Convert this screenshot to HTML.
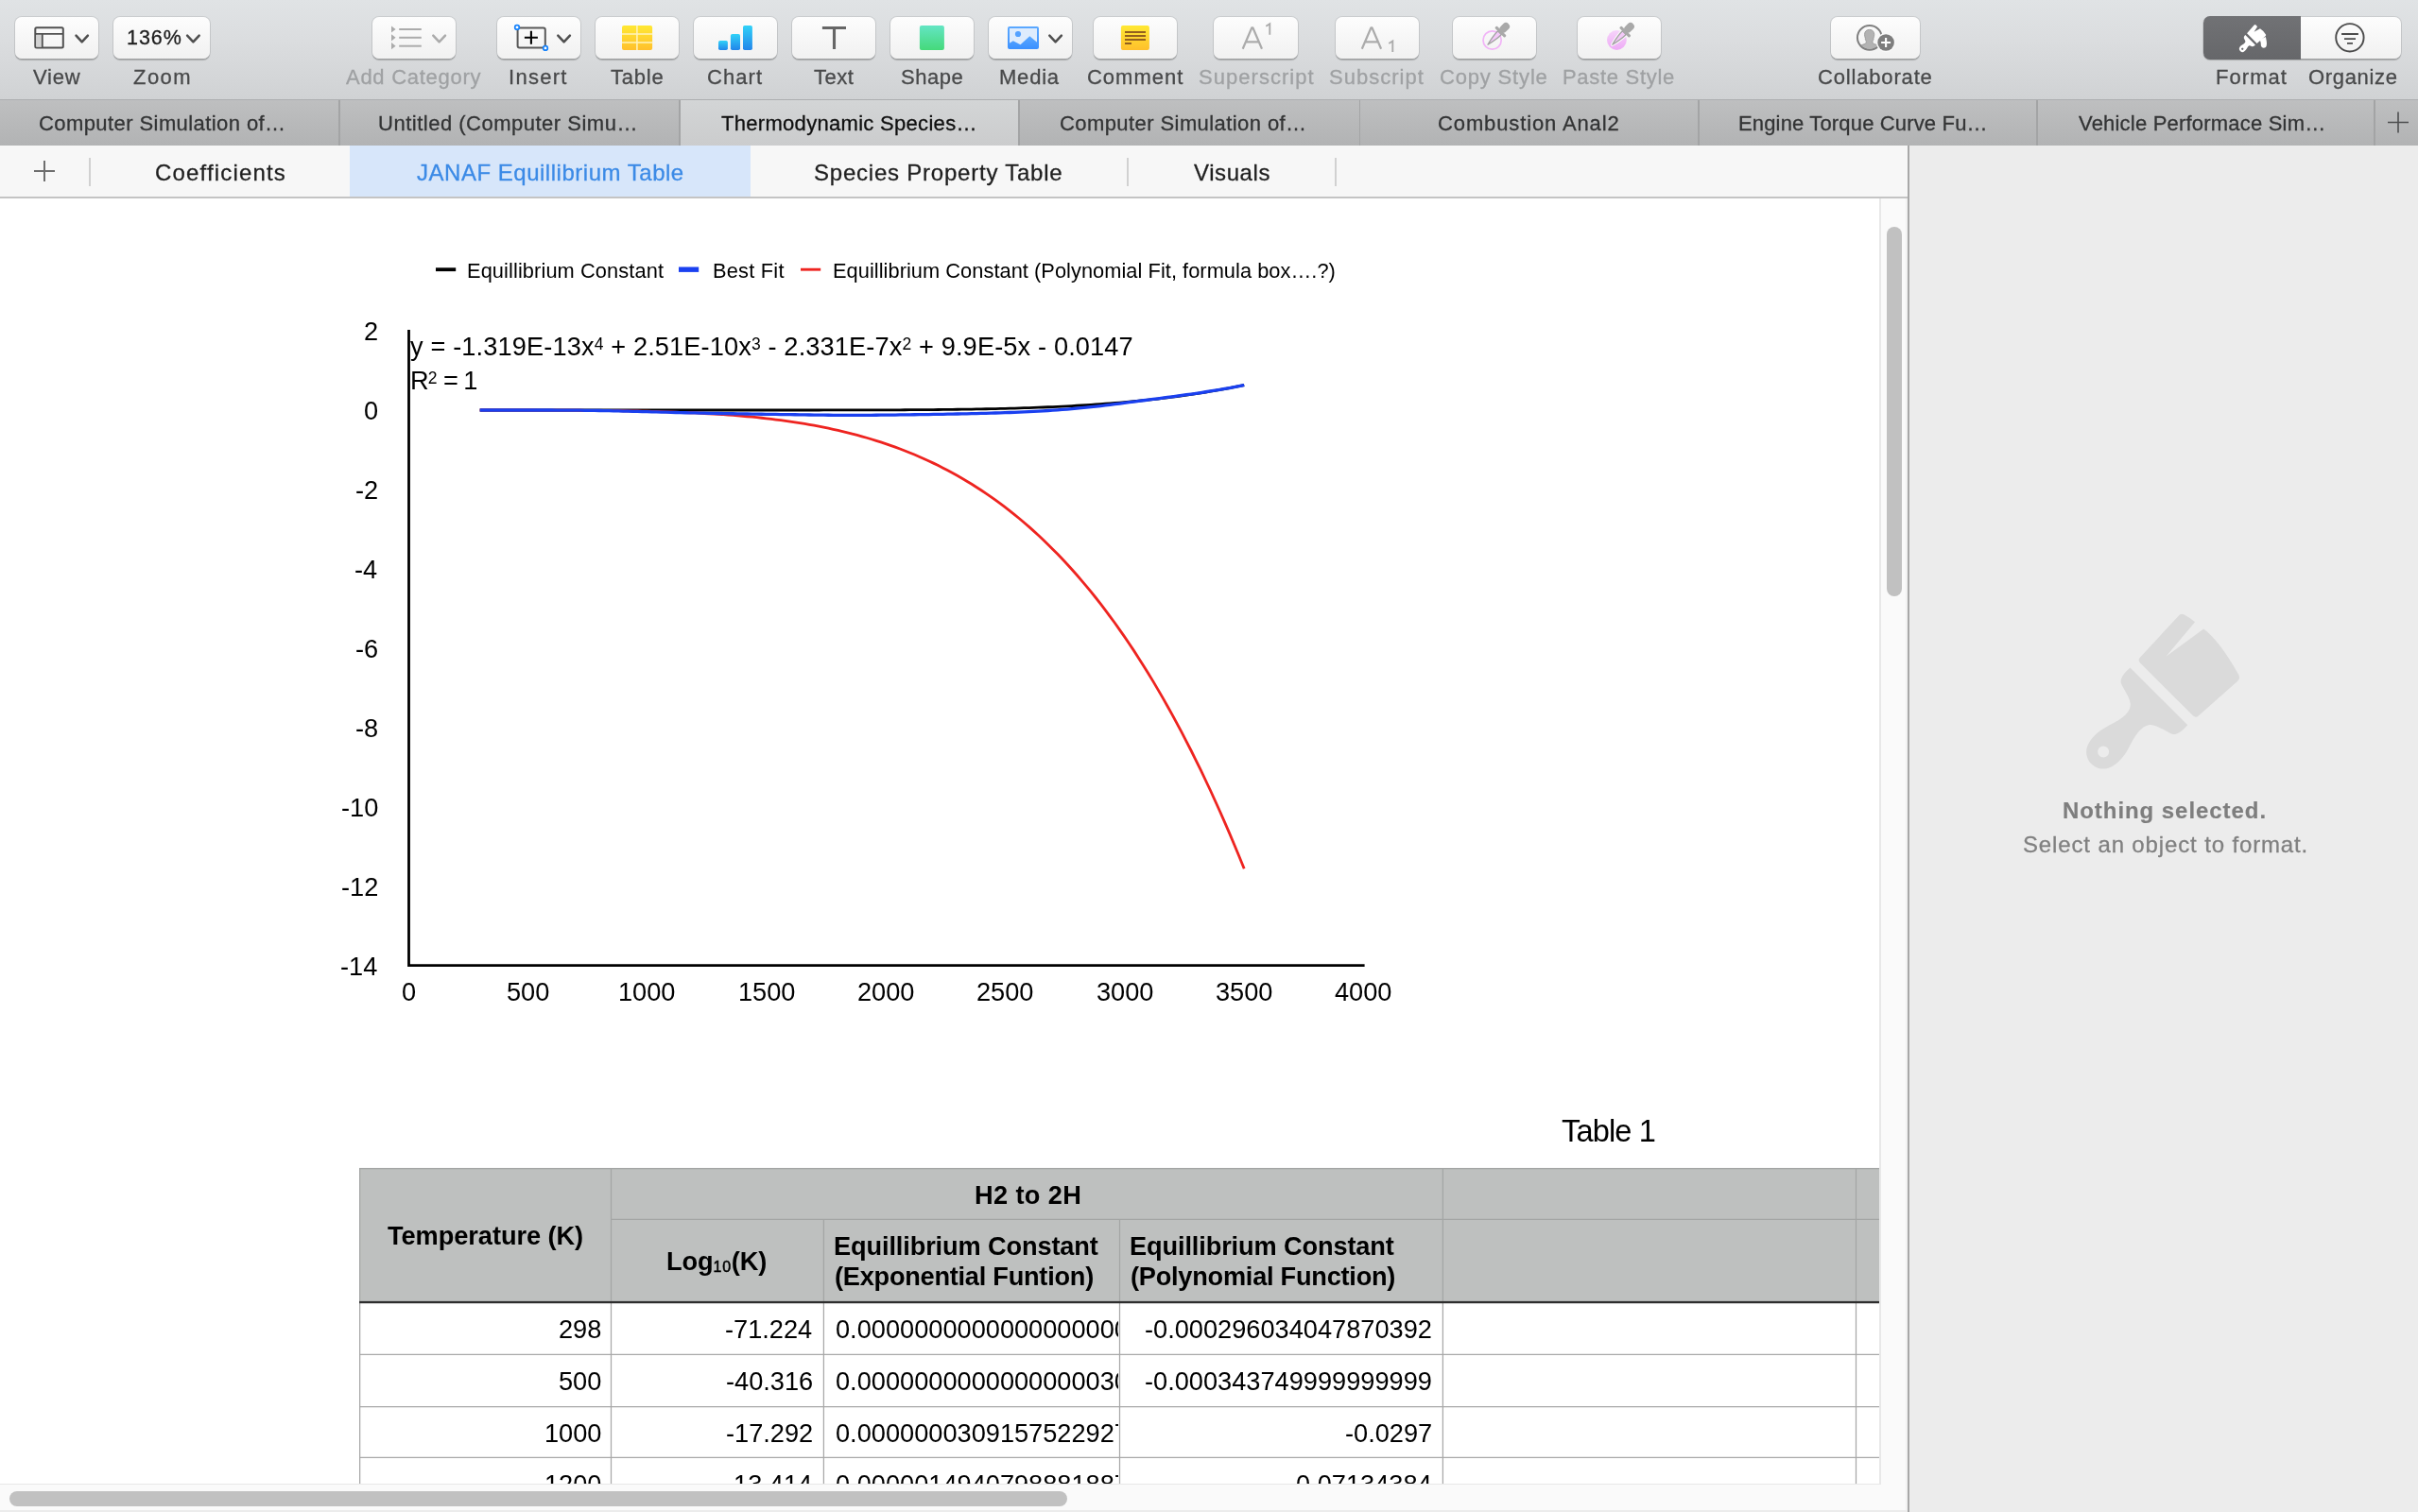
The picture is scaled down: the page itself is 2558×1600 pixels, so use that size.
<!DOCTYPE html>
<html lang="en"><head><meta charset="utf-8"><title>Numbers</title>
<style>
html,body{margin:0;padding:0;}
body{width:2558px;height:1600px;overflow:hidden;position:relative;background:#fff;font-family:"Liberation Sans",sans-serif;}
div,svg{position:absolute;box-sizing:border-box;}
.t{white-space:nowrap;will-change:transform;}
.btn{top:17.5px;height:44.5px;border-radius:7px;background:linear-gradient(#fdfdfd,#f1f1f1);box-shadow:0 0 0 1px rgba(0,0,0,.085),0 1.2px 1px rgba(0,0,0,.20);}
.vl{width:1px;background:#a9a9a9;}
.hl{height:1px;background:#a9a9a9;}

</style></head>
<body>
<div id="toolbar" style="left:0;top:0;width:2558px;height:105px;background:linear-gradient(#e0e3e5 0%,#dbdddf 40%,#d0d2d4 100%);"></div><div style="left:0;top:104.5px;width:2558px;height:1.5px;background:#adaeb0;"></div><div class="btn" style="left:15.8px;width:88.3px;"></div><div class="btn" style="left:119.7px;width:102.2px;"></div><div class="btn" style="left:393.7px;width:88.3px;"></div><div class="btn" style="left:525.7px;width:88.4px;"></div><div class="btn" style="left:629.8px;width:88.3px;"></div><div class="btn" style="left:733.7px;width:88.3px;"></div><div class="btn" style="left:837.7px;width:88.4px;"></div><div class="btn" style="left:941.7px;width:88.3px;"></div><div class="btn" style="left:1045.8px;width:88.3px;"></div><div class="btn" style="left:1156.9px;width:88.4px;"></div><div class="btn" style="left:1284.4px;width:88.9px;"></div><div class="btn" style="left:1412.5px;width:88.8px;"></div><div class="btn" style="left:1536.7px;width:88.4px;"></div><div class="btn" style="left:1669.0px;width:88.3px;"></div><div class="btn" style="left:1936.5px;width:94.7px;"></div><div class="btn" style="left:2331px;width:209.3px;"></div><div style="left:2330.9px;top:17px;width:103px;height:45.6px;border-radius:7px 0 0 7px;background:linear-gradient(#717275,#66676a);"></div><div class="t" style="top:71.38px;font-size:22px;line-height:22px;color:#48494a;letter-spacing:0.749px;left:34.90px;-webkit-text-stroke:0.3px;">View</div><div class="t" style="top:71.38px;font-size:22px;line-height:22px;color:#48494a;letter-spacing:1.466px;left:140.80px;-webkit-text-stroke:0.3px;">Zoom</div><div class="t" style="top:71.38px;font-size:22px;line-height:22px;color:#9fa1a3;letter-spacing:0.732px;left:366.46px;-webkit-text-stroke:0.3px;">Add Category</div><div class="t" style="top:71.38px;font-size:22px;line-height:22px;color:#48494a;letter-spacing:1.282px;left:537.97px;-webkit-text-stroke:0.3px;">Insert</div><div class="t" style="top:71.38px;font-size:22px;line-height:22px;color:#48494a;letter-spacing:0.782px;left:646.01px;-webkit-text-stroke:0.3px;">Table</div><div class="t" style="top:71.38px;font-size:22px;line-height:22px;color:#48494a;letter-spacing:1.058px;left:748.13px;-webkit-text-stroke:0.3px;">Chart</div><div class="t" style="top:71.38px;font-size:22px;line-height:22px;color:#48494a;letter-spacing:0.515px;left:860.76px;-webkit-text-stroke:0.3px;">Text</div><div class="t" style="top:71.38px;font-size:22px;line-height:22px;color:#48494a;letter-spacing:0.525px;left:952.75px;-webkit-text-stroke:0.3px;">Shape</div><div class="t" style="top:71.38px;font-size:22px;line-height:22px;color:#48494a;letter-spacing:0.783px;left:1056.95px;-webkit-text-stroke:0.3px;">Media</div><div class="t" style="top:71.38px;font-size:22px;line-height:22px;color:#48494a;letter-spacing:0.986px;left:1149.63px;-webkit-text-stroke:0.3px;">Comment</div><div class="t" style="top:71.38px;font-size:22px;line-height:22px;color:#9fa1a3;letter-spacing:1.038px;left:1267.75px;-webkit-text-stroke:0.3px;">Superscript</div><div class="t" style="top:71.38px;font-size:22px;line-height:22px;color:#9fa1a3;letter-spacing:1.024px;left:1406.00px;-webkit-text-stroke:0.3px;">Subscript</div><div class="t" style="top:71.38px;font-size:22px;line-height:22px;color:#9fa1a3;letter-spacing:0.828px;left:1523.38px;-webkit-text-stroke:0.3px;">Copy Style</div><div class="t" style="top:71.38px;font-size:22px;line-height:22px;color:#9fa1a3;letter-spacing:0.700px;left:1653.20px;-webkit-text-stroke:0.3px;">Paste Style</div><div class="t" style="top:71.38px;font-size:22px;line-height:22px;color:#48494a;letter-spacing:0.833px;left:1922.63px;-webkit-text-stroke:0.3px;">Collaborate</div><div class="t" style="top:71.38px;font-size:22px;line-height:22px;color:#48494a;letter-spacing:1.056px;left:2344.20px;-webkit-text-stroke:0.3px;">Format</div><div class="t" style="top:71.38px;font-size:22px;line-height:22px;color:#48494a;letter-spacing:0.677px;left:2441.56px;-webkit-text-stroke:0.3px;">Organize</div><div class="t" style="top:29.50px;font-size:21.5px;line-height:21.5px;color:#1d1d1d;letter-spacing:0.968px;left:133.66px;-webkit-text-stroke:0.3px;">136%</div><div style="left:0;top:106px;width:2558px;height:48px;background:linear-gradient(#bebfc0,#b2b3b4);"></div><div style="left:719.3px;top:106px;width:359.0px;height:48px;background:linear-gradient(#d3d5d6,#cbcccd);"></div><div style="left:358.40000000000003px;top:106px;width:1.8px;height:48px;background:#a3a4a5;"></div><div style="left:718.4px;top:106px;width:1.8px;height:48px;background:#a3a4a5;"></div><div style="left:1077.3999999999999px;top:106px;width:1.8px;height:48px;background:#a3a4a5;"></div><div style="left:1437.6px;top:106px;width:1.8px;height:48px;background:#a3a4a5;"></div><div style="left:1795.8999999999999px;top:106px;width:1.8px;height:48px;background:#a3a4a5;"></div><div style="left:2154.1px;top:106px;width:1.8px;height:48px;background:#a3a4a5;"></div><div style="left:2511.4px;top:106px;width:1.8px;height:48px;background:#a3a4a5;"></div><div class="t" style="top:119.58px;font-size:22px;line-height:22px;color:#333435;letter-spacing:0.419px;left:41.38px;-webkit-text-stroke:0.3px;">Computer Simulation of…</div><div class="t" style="top:119.58px;font-size:22px;line-height:22px;color:#333435;letter-spacing:0.503px;left:400.30px;-webkit-text-stroke:0.3px;">Untitled (Computer Simu…</div><div class="t" style="top:119.58px;font-size:22px;line-height:22px;color:#0f0f0f;letter-spacing:0.303px;left:762.51px;-webkit-text-stroke:0.3px;">Thermodynamic Species…</div><div class="t" style="top:119.58px;font-size:22px;line-height:22px;color:#333435;letter-spacing:0.419px;left:1121.38px;-webkit-text-stroke:0.3px;">Computer Simulation of…</div><div class="t" style="top:119.58px;font-size:22px;line-height:22px;color:#333435;letter-spacing:0.877px;left:1521.38px;-webkit-text-stroke:0.3px;">Combustion Anal2</div><div class="t" style="top:119.58px;font-size:22px;line-height:22px;color:#333435;letter-spacing:0.157px;left:1838.95px;-webkit-text-stroke:0.3px;">Engine Torque Curve Fu…</div><div class="t" style="top:119.58px;font-size:22px;line-height:22px;color:#333435;letter-spacing:0.201px;left:2198.60px;-webkit-text-stroke:0.3px;">Vehicle Performace Sim…</div><svg style="left:2524px;top:117px" width="26" height="26" viewBox="0 0 26 26"><path d="M13 1.5v22M2 12.5h22" stroke="#4e4f50" stroke-width="1.6" fill="none"/></svg><div style="left:0;top:154px;width:2018px;height:54.5px;background:#f7f7f7;"></div><div style="left:370px;top:154px;width:424px;height:54.5px;background:#d7e6fa;"></div><div style="left:0;top:208px;width:2018px;height:2px;background:#c4c4c4;"></div><div style="left:94.0px;top:167px;width:2px;height:30px;background:#d1d1d1;"></div><div style="left:1191.8px;top:167px;width:2px;height:30px;background:#d1d1d1;"></div><div style="left:1411.8px;top:167px;width:2px;height:30px;background:#d1d1d1;"></div><svg style="left:35px;top:169px" width="24" height="24" viewBox="0 0 24 24"><path d="M12 1v22M1 12h22" stroke="#6e6e6e" stroke-width="2" fill="none"/></svg><div class="t" style="top:170.98px;font-size:24px;line-height:24px;color:#1f1f1f;letter-spacing:1.170px;left:163.78px;-webkit-text-stroke:0.3px;">Coefficients</div><div class="t" style="top:170.98px;font-size:24px;line-height:24px;color:#3b8ae6;letter-spacing:0.516px;left:440.88px;-webkit-text-stroke:0.3px;">JANAF Equillibrium Table</div><div class="t" style="top:170.98px;font-size:24px;line-height:24px;color:#1f1f1f;letter-spacing:0.775px;left:861.41px;-webkit-text-stroke:0.3px;">Species Property Table</div><div class="t" style="top:170.98px;font-size:24px;line-height:24px;color:#1f1f1f;letter-spacing:0.589px;left:1262.89px;-webkit-text-stroke:0.3px;">Visuals</div><div id="canvas" style="left:0;top:210px;width:1988px;height:1360px;background:#fff;"></div><div style="left:1988px;top:210px;width:30px;height:1390px;background:#fafafa;"></div><div style="left:1988px;top:210px;width:1.7px;height:1361.7px;background:#e8e8e8;"></div><div style="left:2016px;top:210px;width:2px;height:1390px;background:#f2f2f2;"></div><div style="left:1996.2px;top:240px;width:16px;height:391px;border-radius:8px;background:#c1c1c1;"></div><div style="left:2018px;top:154px;width:540px;height:1446px;background:#ececec;"></div><div style="left:2018px;top:154px;width:2.2px;height:1446px;background:#a8a8a8;"></div><svg style="left:0;top:0" width="2558" height="105" viewBox="0 0 2558 105"><defs><linearGradient id="gy" x1="0" y1="0" x2="0" y2="1"><stop offset="0" stop-color="#ffe833"/><stop offset="1" stop-color="#ffc02c"/></linearGradient><linearGradient id="gb" x1="0" y1="0" x2="0" y2="1"><stop offset="0" stop-color="#31d2f8"/><stop offset="1" stop-color="#2285ea"/></linearGradient><linearGradient id="gg" x1="0" y1="0" x2="0" y2="1"><stop offset="0" stop-color="#64e5c4"/><stop offset="1" stop-color="#45d97a"/></linearGradient><linearGradient id="gm" x1="0" y1="0" x2="0" y2="1"><stop offset="0" stop-color="#5ba8ff"/><stop offset="1" stop-color="#3d92ff"/></linearGradient><linearGradient id="gp" x1="0" y1="0" x2="0" y2="1"><stop offset="0" stop-color="#f6d4fa"/><stop offset="1" stop-color="#eeaaf6"/></linearGradient></defs><rect x="37.3" y="29.2" width="29.5" height="21.4" rx="1.5" fill="none" stroke="#505050" stroke-width="2"/><rect x="38.3" y="36.8" width="6" height="12.8" fill="#d2d2d2"/><path d="M37.3,35.9H66.8M44.8,35.9V50.6" stroke="#505050" stroke-width="1.8" fill="none"/><path d="M80.5,37.6 L86.7,44.4 L92.9,37.6" fill="none" stroke="#4f4f4f" stroke-width="2.5" stroke-linecap="round" stroke-linejoin="round"/><path d="M198.1,37.6 L204.39999999999998,44.4 L210.7,37.6" fill="none" stroke="#4f4f4f" stroke-width="2.5" stroke-linecap="round" stroke-linejoin="round"/><path d="M414,27.4 L418.6,31.0 L414,34.6Z" fill="#ababab"/><path d="M422.2,31.0H445.8" stroke="#ababab" stroke-width="2"/><path d="M414,36.199999999999996 L418.6,39.8 L414,43.4Z" fill="#ababab"/><path d="M422.2,39.8H445.8" stroke="#ababab" stroke-width="2"/><path d="M414,45.1 L418.6,48.7 L414,52.300000000000004Z" fill="#ababab"/><path d="M422.2,48.7H445.8" stroke="#ababab" stroke-width="2"/><path d="M458.3,37.6 L464.65,44.4 L471.0,37.6" fill="none" stroke="#ababab" stroke-width="2.5" stroke-linecap="round" stroke-linejoin="round"/><rect x="547.6" y="29.6" width="29.2" height="20.8" rx="2" fill="none" stroke="#585858" stroke-width="2"/><path d="M554.9,39.8H568.9M561.9,32.8V46.8" stroke="#000" stroke-width="2.1" fill="none"/><circle cx="547" cy="28.9" r="2.3" fill="#fff" stroke="#1682fb" stroke-width="1.7"/><circle cx="577" cy="50.9" r="2.3" fill="#fff" stroke="#1682fb" stroke-width="1.7"/><path d="M590.3,37.6 L596.5999999999999,44.4 L602.9,37.6" fill="none" stroke="#4f4f4f" stroke-width="2.5" stroke-linecap="round" stroke-linejoin="round"/><rect x="658" y="26.9" width="32.1" height="26.1" rx="2" fill="url(#gy)"/><path d="M673.9,26.9V53M658,36H690.1M658,44.9H690.1" stroke="#fff3bd" stroke-width="1.5" fill="none"/><rect x="760" y="43" width="9.9" height="10" rx="1.8" fill="url(#gb)"/><rect x="772.9" y="36" width="10.1" height="17" rx="1.8" fill="url(#gb)"/><rect x="786" y="26.9" width="9.9" height="26.1" rx="1.8" fill="url(#gb)"/><path d="M869.9,29.5H895M882.5,29.5V52" stroke="#666" stroke-width="3.1" fill="none"/><rect x="972.9" y="26.9" width="26" height="26.1" rx="2" fill="url(#gg)"/><rect x="1067" y="29" width="31" height="21.9" rx="1" fill="#deecfd" stroke="url(#gm)" stroke-width="2"/><circle cx="1077" cy="36" r="3.1" fill="#55a2ff"/><path d="M1067,46.2 L1071.8,43.2 L1079.5,47.2 L1089.3,38.2 L1098,45.6 V50.9 H1067Z" fill="url(#gm)"/><path d="M1110.3,37.6 L1116.6,44.4 L1122.9,37.6" fill="none" stroke="#4f4f4f" stroke-width="2.5" stroke-linecap="round" stroke-linejoin="round"/><rect x="1185.9" y="26.9" width="30" height="26.1" rx="2" fill="url(#gy)"/><path d="M1190,34H1212M1190,38H1212M1190,42H1212M1190,46H1197" stroke="#93601f" stroke-width="1.9" fill="none"/><path d="M1314.7,51.7 L1324.35,29.3 H1325.35 L1335,51.7 M1318.3,44.3 H1331.4" fill="none" stroke="#ababab" stroke-width="2.2" stroke-linejoin="round"/><path d="M1339.3,27.8 L1343.3,25.2 V36.8" fill="none" stroke="#ababab" stroke-width="1.9"/><path d="M1440.8,51.7 L1450.4499999999998,29.3 H1451.4499999999998 L1461.1,51.7 M1444.3999999999999,44.3 H1457.5" fill="none" stroke="#ababab" stroke-width="2.2" stroke-linejoin="round"/><path d="M1469.3,46.0 L1473.3,43.400000000000006 V55.0" fill="none" stroke="#ababab" stroke-width="1.9"/><circle cx="1578.6" cy="42.5" r="9.6" fill="none" stroke="#f1b4f7" stroke-width="1.7"/><g transform="translate(1574.2,46.9) rotate(45)"><path d="M0,0.3 C-1.1,-4 -2.7,-10 -2.7,-17.4 H2.7 C2.7,-10 1.1,-4 0,0.3Z" fill="#f3c9f8" stroke="#a3a3a3" stroke-width="1.3" stroke-linejoin="round"/><rect x="-7.3" y="-20.3" width="14.6" height="3.1" rx="1" fill="#a9a9a9"/><rect x="-3.9" y="-30.6" width="7.8" height="11.5" rx="3.7" fill="#a9a9a9"/></g><circle cx="1710.4" cy="42.5" r="10.4" fill="url(#gp)"/><g transform="translate(1706.0,46.9) rotate(45)"><path d="M0,0.3 C-1.1,-4 -2.7,-10 -2.7,-17.4 H2.7 C2.7,-10 1.1,-4 0,0.3Z" fill="#fbfbfb" stroke="#fbfbfb" stroke-width="3.4" stroke-linejoin="round"/><path d="M0,0.3 C-1.1,-4 -2.7,-10 -2.7,-17.4 H2.7 C2.7,-10 1.1,-4 0,0.3Z" fill="#f3c9f8" stroke="#a3a3a3" stroke-width="1.3" stroke-linejoin="round"/><rect x="-7.3" y="-20.3" width="14.6" height="3.1" rx="1" fill="#a9a9a9"/><rect x="-3.9" y="-30.6" width="7.8" height="11.5" rx="3.7" fill="#a9a9a9"/></g><clipPath id="cc"><circle cx="1977.85" cy="39.8" r="11.9"/></clipPath><g clip-path="url(#cc)"><path d="M1977.85,31.4 c3.2,0 4.9,2.2 4.9,5.2 c0,1.6 -0.3,2.6 -0.8,3.6 c0.3,1.6 -0.4,2.4 -0.9,3.4 c-0.2,1.3 0.2,2.2 1.1,2.7 l6.5,2.5 c1.2,0.5 1.8,1.4 1.8,2.6 v4 h-25.6 v-4 c0,-1.2 0.6,-2.1 1.8,-2.6 l6.5,-2.5 c0.9,-0.5 1.3,-1.4 1.1,-2.7 c-0.5,-1 -1.2,-1.8 -0.9,-3.4 c-0.5,-1 -0.8,-2 -0.8,-3.6 c0,-3 1.7,-5.2 4.9,-5.2z" fill="#b3b3b3" stroke="#9a9a9a" stroke-width="0.9"/></g><circle cx="1977.85" cy="39.8" r="12.9" fill="none" stroke="#7f7f7f" stroke-width="2"/><circle cx="1995.1" cy="45" r="10.3" fill="#f8f8f8"/><circle cx="1995.1" cy="45" r="8.8" fill="#7d7d7d"/><path d="M1990.1,45H2000.1M1995.1,40V50" stroke="#fff" stroke-width="2.1" fill="none"/><g transform="translate(2382.0,42.0) rotate(45)" fill="#fff"><path d="M-8.2,-1.2 L-9,-12.8 Q-9.1,-14.2 -7.7,-14.2 L-5.5,-14.1 L-4.0,-7.6 L-2.0,-14.7 Q3,-15.8 7.0,-14.4 Q7.7,-14 7.6,-13 L6.7,-1.2 Z"/><path fill-rule="evenodd" d="M-8.2,1.2 H6.7 C6.8,3.2 6.2,4.6 4.8,5 C3.4,5.4 2.5,5.6 2.4,7 C2.3,8.6 2.9,9.6 3.2,11 C3.8,13.6 3.3,15.6 2.2,16.4 C1,17.3 -1,17.3 -2.2,16.4 C-3.3,15.6 -3.8,13.6 -3.2,11 C-2.9,9.6 -2.6,8.6 -2.8,7 C-3,5.6 -4.6,5.4 -6,5 C-7.6,4.6 -8.3,3.2 -8.2,1.2 Z M1.15,13.8 A1.15,1.15 0 1 0 -1.15,13.8 A1.15,1.15 0 1 0 1.15,13.8 Z"/></g><path d="M2390.4,41.9 L2396.9,38.9 C2397.4,42 2398.6,45.3 2397.7,48.6 C2397,51.3 2393.2,51.6 2392.2,49.1 C2391.4,47 2392.4,45 2390.4,41.9Z" fill="#fff"/><circle cx="2485.9" cy="39.8" r="14.7" fill="none" stroke="#4c4c4c" stroke-width="1.9"/><path d="M2477.1,36H2494.9M2480,41.1H2492M2483,45.9H2489" stroke="#4c4c4c" stroke-width="1.9" fill="none"/></svg><svg style="left:0;top:210px" width="1988" height="1360" viewBox="0 210 1988 1360"><path d="M432.5,349 V1021.6 H1443.6" fill="none" stroke="#000" stroke-width="2.8" stroke-linejoin="miter"/><path d="M507.7,434.00 L512.8,434.00 L517.8,434.00 L522.9,434.00 L527.9,434.00 L533.0,434.00 L538.0,434.00 L543.1,434.00 L548.1,434.00 L553.2,434.00 L558.2,434.00 L563.3,434.00 L568.3,434.00 L573.4,434.00 L578.4,434.00 L583.5,434.00 L588.5,434.00 L593.6,434.00 L598.6,434.00 L603.7,434.00 L608.7,434.00 L613.8,434.00 L618.8,434.00 L623.9,434.00 L628.9,434.00 L634.0,434.00 L639.0,434.00 L644.1,434.00 L649.1,434.00 L654.2,434.00 L659.2,434.00 L664.3,434.00 L669.3,434.00 L674.4,434.00 L679.4,434.00 L684.5,434.00 L689.5,434.00 L694.6,434.00 L699.6,434.00 L704.7,434.00 L709.7,434.00 L714.8,434.00 L719.8,434.00 L724.9,434.00 L729.9,434.00 L735.0,434.00 L740.0,434.00 L745.1,434.00 L750.1,434.00 L755.2,434.00 L760.2,434.00 L765.3,434.00 L770.3,434.00 L775.4,434.00 L780.4,434.00 L785.5,434.00 L790.5,434.00 L795.6,434.00 L800.6,434.00 L805.7,434.00 L810.7,434.00 L815.8,434.00 L820.8,434.00 L825.9,433.99 L830.9,433.99 L836.0,433.99 L841.0,433.99 L846.1,433.99 L851.1,433.99 L856.2,433.98 L861.2,433.98 L866.3,433.98 L871.3,433.97 L876.4,433.97 L881.4,433.96 L886.5,433.96 L891.5,433.95 L896.6,433.94 L901.6,433.94 L906.7,433.93 L911.7,433.92 L916.8,433.90 L921.8,433.89 L926.9,433.88 L931.9,433.86 L937.0,433.84 L942.0,433.82 L947.1,433.80 L952.1,433.78 L957.2,433.75 L962.2,433.72 L967.3,433.69 L972.3,433.66 L977.4,433.62 L982.4,433.58 L987.5,433.54 L992.5,433.49 L997.6,433.44 L1002.6,433.39 L1007.7,433.33 L1012.7,433.26 L1017.8,433.19 L1022.8,433.12 L1027.9,433.04 L1032.9,432.95 L1038.0,432.86 L1043.0,432.76 L1048.1,432.66 L1053.1,432.55 L1058.2,432.43 L1063.2,432.30 L1068.3,432.17 L1073.3,432.03 L1078.4,431.88 L1083.4,431.72 L1088.5,431.55 L1093.5,431.37 L1098.6,431.18 L1103.6,430.98 L1108.7,430.77 L1113.7,430.55 L1118.8,430.32 L1123.8,430.08 L1128.9,429.82 L1133.9,429.55 L1139.0,429.27 L1144.0,428.98 L1149.1,428.66 L1154.1,428.34 L1159.2,428.00 L1164.2,427.64 L1169.3,427.27 L1174.3,426.88 L1179.4,426.48 L1184.4,426.05 L1189.5,425.62 L1194.5,425.16 L1199.6,424.68 L1204.6,424.19 L1209.7,423.68 L1214.7,423.14 L1219.8,422.59 L1224.8,422.02 L1229.9,421.42 L1234.9,420.81 L1240.0,420.17 L1245.0,419.51 L1250.1,418.82 L1255.1,418.11 L1260.2,417.38 L1265.2,416.62 L1270.3,415.84 L1275.3,415.04 L1280.4,414.21 L1285.4,413.35 L1290.5,412.47 L1295.5,411.56 L1300.6,410.62 L1305.6,409.66 L1310.7,408.66 L1315.7,407.64 L1316.2,407.54" fill="none" stroke="#000" stroke-width="2.8" stroke-linejoin="round"/><path d="M507.7,434.01 L512.8,434.00 L517.8,434.00 L522.9,433.99 L527.9,433.99 L533.0,433.99 L538.0,433.99 L543.1,433.99 L548.1,434.00 L553.2,434.00 L558.2,434.01 L563.3,434.02 L568.3,434.04 L573.4,434.05 L578.4,434.07 L583.5,434.09 L588.5,434.11 L593.6,434.13 L598.6,434.16 L603.7,434.18 L608.7,434.21 L613.8,434.25 L618.8,434.29 L623.9,434.33 L628.9,434.37 L634.0,434.42 L639.0,434.48 L644.1,434.54 L649.1,434.60 L654.2,434.67 L659.2,434.75 L664.3,434.83 L669.3,434.92 L674.4,435.02 L679.4,435.12 L684.5,435.24 L689.5,435.36 L694.6,435.49 L699.6,435.63 L704.7,435.79 L709.7,435.95 L714.8,436.13 L719.8,436.32 L724.9,436.52 L729.9,436.74 L735.0,436.97 L740.0,437.22 L745.1,437.49 L750.1,437.77 L755.2,438.07 L760.2,438.39 L765.3,438.72 L770.3,439.08 L775.4,439.46 L780.4,439.87 L785.5,440.30 L790.5,440.75 L795.6,441.22 L800.6,441.73 L805.7,442.26 L810.7,442.82 L815.8,443.41 L820.8,444.03 L825.9,444.68 L830.9,445.36 L836.0,446.08 L841.0,446.83 L846.1,447.62 L851.1,448.45 L856.2,449.32 L861.2,450.23 L866.3,451.17 L871.3,452.17 L876.4,453.20 L881.4,454.28 L886.5,455.41 L891.5,456.59 L896.6,457.81 L901.6,459.09 L906.7,460.42 L911.7,461.81 L916.8,463.25 L921.8,464.74 L926.9,466.30 L931.9,467.91 L937.0,469.59 L942.0,471.33 L947.1,473.14 L952.1,475.01 L957.2,476.95 L962.2,478.96 L967.3,481.05 L972.3,483.20 L977.4,485.44 L982.4,487.75 L987.5,490.13 L992.5,492.60 L997.6,495.15 L1002.6,497.79 L1007.7,500.51 L1012.7,503.32 L1017.8,506.22 L1022.8,509.21 L1027.9,512.30 L1032.9,515.48 L1038.0,518.76 L1043.0,522.14 L1048.1,525.62 L1053.1,529.21 L1058.2,532.90 L1063.2,536.70 L1068.3,540.62 L1073.3,544.64 L1078.4,548.78 L1083.4,553.04 L1088.5,557.41 L1093.5,561.91 L1098.6,566.53 L1103.6,571.28 L1108.7,576.16 L1113.7,581.16 L1118.8,586.30 L1123.8,591.58 L1128.9,596.99 L1133.9,602.55 L1139.0,608.24 L1144.0,614.08 L1149.1,620.07 L1154.1,626.21 L1159.2,632.50 L1164.2,638.95 L1169.3,645.56 L1174.3,652.32 L1179.4,659.25 L1184.4,666.35 L1189.5,673.61 L1194.5,681.04 L1199.6,688.65 L1204.6,696.43 L1209.7,704.40 L1214.7,712.54 L1219.8,720.87 L1224.8,729.39 L1229.9,738.10 L1234.9,747.00 L1240.0,756.09 L1245.0,765.39 L1250.1,774.89 L1255.1,784.59 L1260.2,794.50 L1265.2,804.62 L1270.3,814.95 L1275.3,825.50 L1280.4,836.27 L1285.4,847.26 L1290.5,858.48 L1295.5,869.93 L1300.6,881.61 L1305.6,893.52 L1310.7,905.68 L1315.7,918.07 L1316.2,919.32" fill="none" stroke="#ee2420" stroke-width="2.8" stroke-linejoin="round"/><path d="M507.7,434.00 L512.8,434.00 L517.8,434.00 L522.9,434.00 L527.9,434.00 L533.0,434.00 L538.0,434.00 L543.1,434.00 L548.1,434.00 L553.2,434.00 L558.2,434.00 L563.3,434.00 L568.3,434.00 L573.4,434.00 L578.4,434.01 L583.5,434.02 L588.5,434.04 L593.6,434.06 L598.6,434.08 L603.7,434.12 L608.7,434.16 L613.8,434.22 L618.8,434.28 L623.9,434.35 L628.9,434.43 L634.0,434.52 L639.0,434.62 L644.1,434.72 L649.1,434.82 L654.2,434.94 L659.2,435.05 L664.3,435.17 L669.3,435.30 L674.4,435.43 L679.4,435.56 L684.5,435.69 L689.5,435.82 L694.6,435.96 L699.6,436.09 L704.7,436.22 L709.7,436.35 L714.8,436.48 L719.8,436.61 L724.9,436.73 L729.9,436.85 L735.0,436.97 L740.0,437.08 L745.1,437.19 L750.1,437.29 L755.2,437.39 L760.2,437.49 L765.3,437.58 L770.3,437.67 L775.4,437.75 L780.4,437.84 L785.5,437.92 L790.5,438.00 L795.6,438.08 L800.6,438.16 L805.7,438.23 L810.7,438.31 L815.8,438.38 L820.8,438.46 L825.9,438.53 L830.9,438.61 L836.0,438.69 L841.0,438.77 L846.1,438.84 L851.1,438.92 L856.2,439.00 L861.2,439.07 L866.3,439.14 L871.3,439.20 L876.4,439.26 L881.4,439.30 L886.5,439.34 L891.5,439.37 L896.6,439.39 L901.6,439.40 L906.7,439.40 L911.7,439.38 L916.8,439.35 L921.8,439.32 L926.9,439.27 L931.9,439.22 L937.0,439.17 L942.0,439.10 L947.1,439.04 L952.1,438.97 L957.2,438.90 L962.2,438.83 L967.3,438.76 L972.3,438.68 L977.4,438.61 L982.4,438.53 L987.5,438.46 L992.5,438.38 L997.6,438.29 L1002.6,438.20 L1007.7,438.11 L1012.7,438.01 L1017.8,437.91 L1022.8,437.81 L1027.9,437.69 L1032.9,437.57 L1038.0,437.45 L1043.0,437.31 L1048.1,437.17 L1053.1,437.02 L1058.2,436.85 L1063.2,436.68 L1068.3,436.50 L1073.3,436.30 L1078.4,436.09 L1083.4,435.87 L1088.5,435.63 L1093.5,435.38 L1098.6,435.11 L1103.6,434.82 L1108.7,434.51 L1113.7,434.18 L1118.8,433.83 L1123.8,433.45 L1128.9,433.06 L1133.9,432.64 L1139.0,432.19 L1144.0,431.72 L1149.1,431.21 L1154.1,430.68 L1159.2,430.13 L1164.2,429.55 L1169.3,428.95 L1174.3,428.33 L1179.4,427.69 L1184.4,427.05 L1189.5,426.39 L1194.5,425.73 L1199.6,425.07 L1204.6,424.40 L1209.7,423.74 L1214.7,423.08 L1219.8,422.42 L1224.8,421.77 L1229.9,421.12 L1234.9,420.46 L1240.0,419.79 L1245.0,419.12 L1250.1,418.43 L1255.1,417.73 L1260.2,417.02 L1265.2,416.28 L1270.3,415.53 L1275.3,414.75 L1280.4,413.95 L1285.4,413.13 L1290.5,412.28 L1295.5,411.41 L1300.6,410.51 L1305.6,409.58 L1310.7,408.62 L1315.7,407.64 L1316.2,407.54" fill="none" stroke="#1a40f0" stroke-width="3.3" stroke-linejoin="round"/><path d="M461,285.2H482.2" stroke="#000" stroke-width="3.8"/><path d="M718,285.2H739.2" stroke="#1a40f0" stroke-width="5.4"/><path d="M847,285.2H868.2" stroke="#ee2420" stroke-width="2.9"/></svg><div class="t" style="top:275.55px;font-size:21.8px;line-height:21.8px;color:#000;letter-spacing:0.100px;left:494.21px;">Equillibrium Constant</div><div class="t" style="top:275.55px;font-size:21.8px;line-height:21.8px;color:#000;letter-spacing:0.222px;left:753.71px;">Best Fit</div><div class="t" style="top:275.55px;font-size:21.8px;line-height:21.8px;color:#000;letter-spacing:0.047px;left:881.21px;">Equillibrium Constant (Polynomial Fit, formula box….?)</div><div class="t" style="top:336.98px;font-size:27.2px;line-height:27.2px;color:#000;left:385.04px;">2</div><div class="t" style="top:420.98px;font-size:27.2px;line-height:27.2px;color:#000;left:384.74px;">0</div><div class="t" style="top:504.98px;font-size:27.2px;line-height:27.2px;color:#000;left:375.98px;">-2</div><div class="t" style="top:588.98px;font-size:27.2px;line-height:27.2px;color:#000;left:375.41px;">-4</div><div class="t" style="top:672.98px;font-size:27.2px;line-height:27.2px;color:#000;left:375.81px;">-6</div><div class="t" style="top:756.98px;font-size:27.2px;line-height:27.2px;color:#000;left:375.79px;">-8</div><div class="t" style="top:840.98px;font-size:27.2px;line-height:27.2px;color:#000;left:360.57px;">-10</div><div class="t" style="top:924.98px;font-size:27.2px;line-height:27.2px;color:#000;left:360.87px;">-12</div><div class="t" style="top:1008.98px;font-size:27.2px;line-height:27.2px;color:#000;left:360.30px;">-14</div><div class="t" style="top:1036.38px;font-size:27.2px;line-height:27.2px;color:#000;left:424.94px;">0</div><div class="t" style="top:1036.38px;font-size:27.2px;line-height:27.2px;color:#000;left:536.05px;">500</div><div class="t" style="top:1036.38px;font-size:27.2px;line-height:27.2px;color:#000;left:654.25px;">1000</div><div class="t" style="top:1036.38px;font-size:27.2px;line-height:27.2px;color:#000;left:780.50px;">1500</div><div class="t" style="top:1036.38px;font-size:27.2px;line-height:27.2px;color:#000;left:907.11px;">2000</div><div class="t" style="top:1036.38px;font-size:27.2px;line-height:27.2px;color:#000;left:1033.36px;">2500</div><div class="t" style="top:1036.38px;font-size:27.2px;line-height:27.2px;color:#000;left:1159.77px;">3000</div><div class="t" style="top:1036.38px;font-size:27.2px;line-height:27.2px;color:#000;left:1286.02px;">3500</div><div class="t" style="top:1036.38px;font-size:27.2px;line-height:27.2px;color:#000;left:1412.48px;">4000</div><div class="t" style="top:353.28px;font-size:27.2px;line-height:27.2px;color:#000;letter-spacing:0.137px;left:434.23px;">y = -1.319E-13x<span style="font-size:17.5px;vertical-align:6.4px;line-height:0;letter-spacing:0">4</span> + 2.51E-10x<span style="font-size:17.5px;vertical-align:6.4px;line-height:0;letter-spacing:0">3</span> - 2.331E-7x<span style="font-size:17.5px;vertical-align:6.4px;line-height:0;letter-spacing:0">2</span> + 9.9E-5x - 0.0147</div><div class="t" style="top:389.48px;font-size:27.2px;line-height:27.2px;color:#000;letter-spacing:-1.005px;left:433.97px;">R<span style="font-size:17.5px;vertical-align:6.4px;line-height:0;letter-spacing:0">2</span> = 1</div><svg style="left:0;top:1230px" width="1988" height="340" viewBox="0 1230 1988 340"><rect x="380.05" y="1235.9" width="1607.95" height="141.0999999999999" fill="#bec0bf"/><path d="M380.05,1236.5H1988 M646.5,1290.4H1988" stroke="#a4a6a5" stroke-width="1.25" fill="none"/><path d="M380.05,1433.3H1988 M380.05,1488.5H1988 M380.05,1542.4H1988" stroke="#a8a8a8" stroke-width="1.25" fill="none"/><path d="M380.65,1235.9V1377 M646.5,1235.9V1377 M871.4,1290.4V1377 M1184.5,1290.4V1377 M1526.4,1235.9V1377 M1963.5,1235.9V1377" stroke="#a4a6a5" stroke-width="1.25" fill="none"/><path d="M380.65,1379V1570 M646.5,1379V1570 M871.4,1379V1570 M1184.5,1379V1570 M1526.4,1379V1570 M1963.5,1379V1570" stroke="#a8a8a8" stroke-width="1.25" fill="none"/><rect x="380.05" y="1376.9" width="1607.95" height="2.3" fill="#2d2d2d"/></svg><div class="t" style="top:1181.20px;font-size:32.6px;line-height:32.6px;color:#000;letter-spacing:-0.873px;left:1652.37px;">Table 1</div><div class="t" style="top:1294.18px;font-size:27.2px;line-height:27.2px;color:#000;font-weight:700;letter-spacing:-0.058px;left:409.69px;">Temperature (K)</div><div class="t" style="top:1250.78px;font-size:27.2px;line-height:27.2px;color:#000;font-weight:700;letter-spacing:0.367px;left:1030.68px;">H2 to 2H</div><div class="t" style="top:1320.98px;font-size:27.2px;line-height:27.2px;color:#000;font-weight:700;letter-spacing:-0.087px;left:705.18px;">Log<span style="font-size:16px;vertical-align:-1.9px;line-height:0;letter-spacing:0.7px;font-weight:400;-webkit-text-stroke:0.5px">10</span>(K)</div><div class="t" style="top:1304.88px;font-size:27.2px;line-height:27.2px;color:#000;font-weight:700;letter-spacing:-0.130px;left:882.48px;">Equillibrium Constant</div><div class="t" style="top:1336.88px;font-size:27.2px;line-height:27.2px;color:#000;font-weight:700;letter-spacing:-0.259px;left:882.95px;">(Exponential Funtion)</div><div class="t" style="top:1304.88px;font-size:27.2px;line-height:27.2px;color:#000;font-weight:700;letter-spacing:-0.130px;left:1195.18px;">Equillibrium Constant</div><div class="t" style="top:1336.88px;font-size:27.2px;line-height:27.2px;color:#000;font-weight:700;letter-spacing:-0.253px;left:1195.65px;">(Polynomial Function)</div><div class="t" style="top:1392.78px;font-size:27.2px;line-height:27.2px;color:#000;left:591.01px;">298</div><div class="t" style="top:1392.78px;font-size:27.2px;line-height:27.2px;color:#000;left:767.48px;">-71.224</div><div class="t" style="top:1392.78px;font-size:27.2px;line-height:27.2px;color:#000;left:883.94px;width:298.8px;overflow:hidden;">0.0000000000000000000000000000001168987375</div><div class="t" style="top:1392.78px;font-size:27.2px;line-height:27.2px;color:#000;left:1211.26px;">-0.000296034047870392</div><div class="t" style="top:1447.98px;font-size:27.2px;line-height:27.2px;color:#000;left:590.89px;">500</div><div class="t" style="top:1447.98px;font-size:27.2px;line-height:27.2px;color:#000;left:767.88px;">-40.316</div><div class="t" style="top:1447.98px;font-size:27.2px;line-height:27.2px;color:#000;left:883.94px;width:298.8px;overflow:hidden;">0.0000000000000000030973028174801707346912</div><div class="t" style="top:1447.98px;font-size:27.2px;line-height:27.2px;color:#000;left:1211.18px;">-0.000343749999999999</div><div class="t" style="top:1502.78px;font-size:27.2px;line-height:27.2px;color:#000;left:575.78px;">1000</div><div class="t" style="top:1502.78px;font-size:27.2px;line-height:27.2px;color:#000;left:768.05px;">-17.292</div><div class="t" style="top:1502.78px;font-size:27.2px;line-height:27.2px;color:#000;left:883.94px;width:298.8px;overflow:hidden;">0.0000000309157522927807877392880888181428</div><div class="t" style="top:1502.78px;font-size:27.2px;line-height:27.2px;color:#000;left:1422.95px;">-0.0297</div><div class="t" style="top:1557.48px;font-size:27.2px;line-height:27.2px;color:#000;left:575.78px;height:12.5px;overflow:hidden;">1200</div><div class="t" style="top:1557.48px;font-size:27.2px;line-height:27.2px;color:#000;left:767.48px;height:12.5px;overflow:hidden;">-13.414</div><div class="t" style="top:1557.48px;font-size:27.2px;line-height:27.2px;color:#000;left:883.94px;width:298.8px;overflow:hidden;height:12.5px;overflow:hidden;">0.0000014940798881887926881775855321040272</div><div class="t" style="top:1557.48px;font-size:27.2px;line-height:27.2px;color:#000;left:1361.89px;height:12.5px;overflow:hidden;">-0.07134384</div><div style="left:0;top:1570px;width:1989.7px;height:30px;background:#fafafa;border-top:1.7px solid #e8e8e8;"></div><div style="left:0;top:1598px;width:2018px;height:2px;background:#ececec;"></div><div style="left:10px;top:1578.2px;width:1119px;height:16.3px;border-radius:8.2px;background:#c1c1c1;"></div><svg style="left:2180px;top:630px" width="230" height="220" viewBox="2180 630 230 220"><g transform="translate(2287.4,733.3) rotate(45)" fill="#dadada"><path d="M-43.2,-10 L-45.5,-70 Q-46,-74 -42,-75 Q-36,-77 -28.5,-77.5 L-24.4,-30 L-17,-79 Q4,-82 43,-71 Q48,-69.5 47.5,-65 L44.2,-10 Q44,-6 40,-6 L-39,-6 Q-43,-6 -43.2,-10 Z"/><path fill-rule="evenodd" d="M-43,5 L43,5 C43.5,14 42.5,21 38,23.5 C33,26 22,27 15.5,32 C12,35.5 11,40 11.3,45 C12,56 16,64 17.6,72 C19.2,80 19.6,90 15,98 C11,104 5,106 0,106 C-5,106 -11,104 -15,98 C-19.6,90 -19.2,80 -17.6,72 C-16,64 -12,56 -11.3,45 C-11,40 -12,35.5 -15.5,32 C-22,27 -33,26 -38,23.5 C-42.5,21 -43.5,14 -43,5 Z M6,88 A6,6 0 1 0 -6,88 A6,6 0 1 0 6,88 Z"/></g></svg><div class="t" style="top:845.68px;font-size:24px;line-height:24px;color:#7e7e7e;font-weight:700;letter-spacing:0.939px;left:2182.39px;-webkit-text-stroke:0.2px;">Nothing selected.</div><div class="t" style="top:881.88px;font-size:24px;line-height:24px;color:#808080;letter-spacing:0.864px;left:2139.91px;-webkit-text-stroke:0.3px;">Select an object to format.</div>
</body></html>
